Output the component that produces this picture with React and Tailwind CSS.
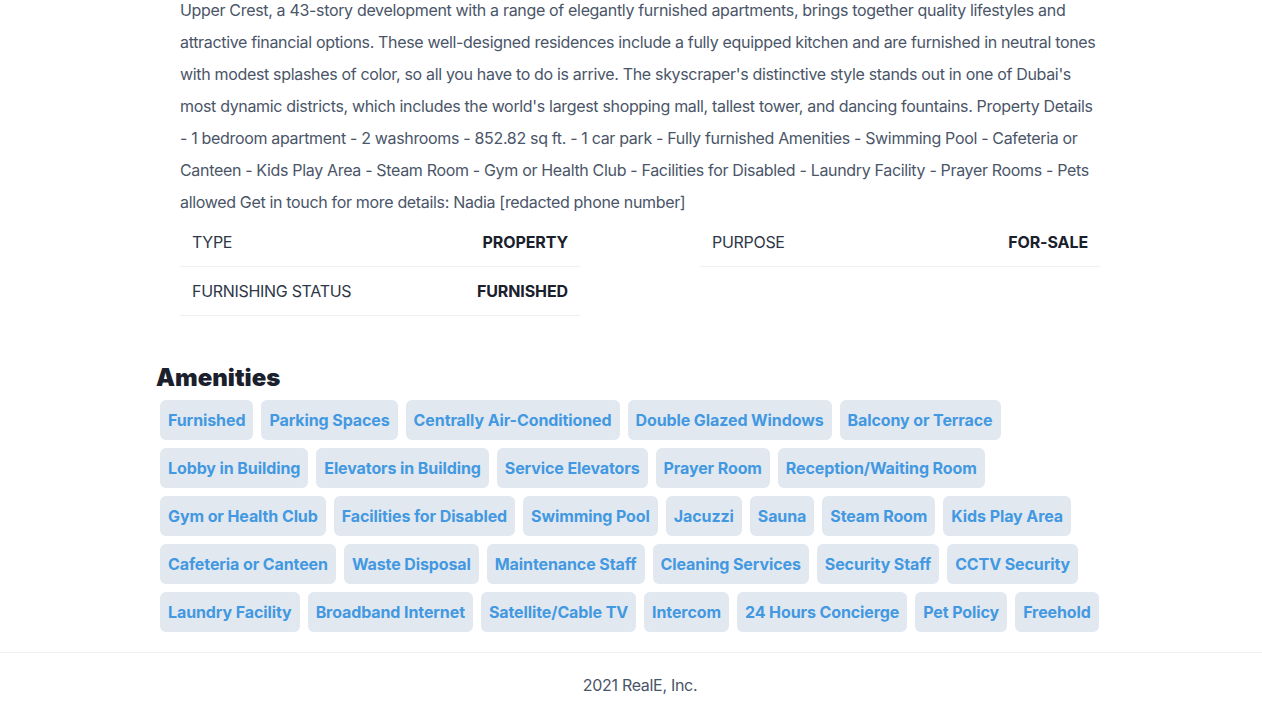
const description =
  "Upper Crest, a 43-story development with a range of elegantly furnished apartments, brings together quality lifestyles and attractive financial options. These well-designed residences include a fully equipped kitchen and are furnished in neutral tones with modest splashes of color, so all you have to do is arrive. The skyscraper's distinctive style stands out in one of Dubai's most dynamic districts, which includes the world's largest shopping mall, tallest tower, and dancing fountains. Property Details - 1 bedroom apartment - 2 washrooms - 852.82 sq ft. - 1 car park - Fully furnished Amenities - Swimming Pool - Cafeteria or Canteen - Kids Play Area - Steam Room - Gym or Health Club - Facilities for Disabled - Laundry Facility - Prayer Rooms - Pets allowed Get in touch for more details: Nadia [redacted phone number]"

const details = [
  { label: 'Type', value: 'Property' },
  { label: 'Purpose', value: 'for-sale' },
  { label: 'Furnishing Status', value: 'furnished' },
]

const amenities = [
  'Furnished',
  'Parking Spaces',
  'Centrally Air-Conditioned',
  'Double Glazed Windows',
  'Balcony or Terrace',
  'Lobby in Building',
  'Elevators in Building',
  'Service Elevators',
  'Prayer Room',
  'Reception/Waiting Room',
  'Gym or Health Club',
  'Facilities for Disabled',
  'Swimming Pool',
  'Jacuzzi',
  'Sauna',
  'Steam Room',
  'Kids Play Area',
  'Cafeteria or Canteen',
  'Waste Disposal',
  'Maintenance Staff',
  'Cleaning Services',
  'Security Staff',
  'CCTV Security',
  'Laundry Facility',
  'Broadband Internet',
  'Satellite/Cable TV',
  'Intercom',
  '24 Hours Concierge',
  'Pet Policy',
  'Freehold',
]

export default function App() {
  return (
    <div className="overflow-hidden h-[711px] bg-white font-['Inter',sans-serif] text-[#1a202c]">
      <div className="w-[1280px]">
        {/* Property body */}
        <div className="max-w-[1000px] mx-auto p-4 -mt-[46px]">
          <div className="p-6">
            <p className="text-base leading-8 tracking-[-0.33px] text-[#4a5568]">{description}</p>
            <div className="flex flex-wrap justify-between uppercase">
              {details.map((d) => (
                <div key={d.label} className="w-[400px] flex justify-between p-3 border-b border-[#edf2f7]">
                  <span className="text-base leading-6 tracking-[-0.3px] text-[#2d3748]">{d.label}</span>
                  <span className="text-base leading-6 font-bold tracking-[-0.1px]">{d.value}</span>
                </div>
              ))}
            </div>
          </div>

          {/* Amenities */}
          <h3 className="text-2xl leading-9 font-black mt-5">Amenities</h3>
          <div className="flex flex-wrap">
            {amenities.map((a) => (
              <span key={a} className="m-1 p-2 rounded-md bg-[#e2e8f0] text-[#4299e1] font-bold text-base leading-6 tracking-[-0.1px]">
                {a}
              </span>
            ))}
          </div>
        </div>

        {/* Footer */}
        <footer className="text-center p-5 border-t border-[#edf2f7] text-[#4a5568] text-base leading-6 tracking-[-0.3px]">
          2021 RealE, Inc.
        </footer>
      </div>
    </div>
  )
}
